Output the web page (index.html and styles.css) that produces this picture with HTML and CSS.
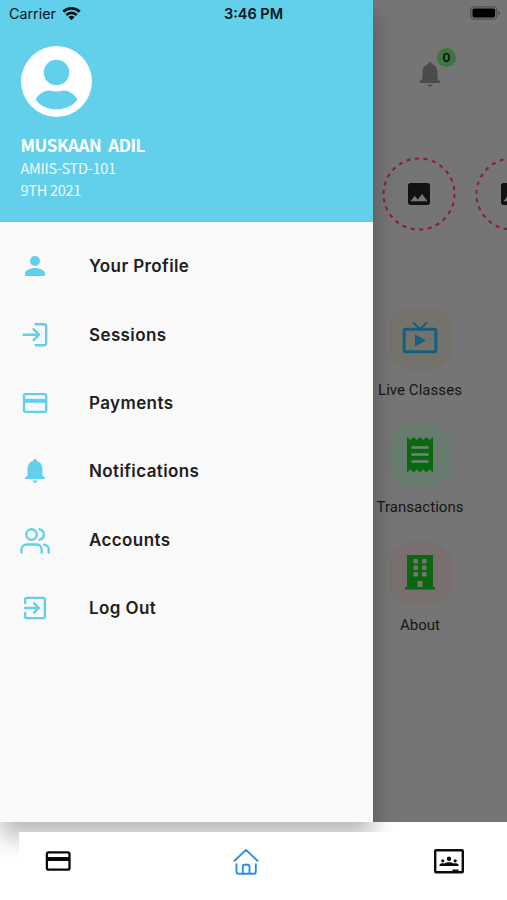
FILE: index.html
```html
<!DOCTYPE html>
<html lang="en">
<head>
<meta charset="utf-8">
<meta name="viewport" content="width=device-width, initial-scale=1">
<title>Student Portal</title>
<link rel="stylesheet" href="styles.css">
</head>
<body>
<div class="phone">
  <main class="screen">
    <div class="topbar">
      <div class="bell">
        <svg class="bell-icon" viewBox="0 0 24 30"><path d="M12 1c1.300 0 2 .9 2 2.100 4 1.100 6 4.500 6 8.600v7.300l3 3v1.600H1V22l3-3v-7.300c0-4.100 2-7.500 6-8.600C10 1.900 10.700 1 12 1zM9.500 25.300h5c-.3 1.500-1.200 2.300-2.500 2.300s-2.200-.8-2.500-2.300z"/></svg>
        <span class="badge">0</span>
      </div>
    </div>
    <div class="stories">
      <div class="story">
        <svg class="ring" viewBox="0 0 74 74"><circle cx="37" cy="37" r="35.500"/></svg>
        <svg class="photo" viewBox="3 3 18 18"><path d="M21 19V5c0-1.100-.9-2-2-2H5c-1.100 0-2 .9-2 2v14c0 1.100.9 2 2 2h14c1.100 0 2-.9 2-2z"/><path class="hill" d="M8.500 13.500l2.500 3.010L14.500 12l4.500 6H5l3.500-4.500z"/></svg>
      </div>
      <div class="story">
        <svg class="ring" viewBox="0 0 74 74"><circle cx="37" cy="37" r="35.500"/></svg>
        <svg class="photo" viewBox="3 3 18 18"><path d="M21 19V5c0-1.100-.9-2-2-2H5c-1.100 0-2 .9-2 2v14c0 1.100.9 2 2 2h14c1.100 0 2-.9 2-2z"/><path class="hill" d="M8.500 13.500l2.500 3.010L14.500 12l4.500 6H5l3.500-4.500z"/></svg>
      </div>
    </div>
    <div class="shortcuts">
      <div class="shortcut">
        <div class="tile cream"><svg width="36" height="38" viewBox="0 0 36 38"><rect x="2.200" y="9.200" width="31.600" height="22.600" rx="1.500" fill="none" stroke="#10607e" stroke-width="3"/><path d="M11 2.500l7 6.500 7-6.500" fill="none" stroke="#10607e" stroke-width="2"/><path d="M13 14.500v12l11-6z" fill="#10607e"/></svg></div>
        <span class="label">Live Classes</span>
      </div>
      <div class="shortcut">
        <div class="tile mint"><svg width="36" height="44" viewBox="0 0 36 44"><path d="M5 3l3.250 3 3.250-3 3.250 3L18 3l3.250 3 3.250-3 3.250 3L31 3v35.500l-3.250-3-3.250 3-3.250-3-3.250 3-3.250-3-3.250 3-3.250-3L5 38.500z" fill="#0c6810"/><path d="M9.500 13.500h17M9.500 20.500h17M9.500 27.500h17" stroke="#70847a" stroke-width="2.300"/></svg></div>
        <span class="label">Transactions</span>
      </div>
      <div class="shortcut">
        <div class="tile rose"><svg width="36" height="42" viewBox="0 0 36 42"><path d="M5 3h26v32h2v2.500H3V35h2z" fill="#0c6810"/><g fill="#7a7272"><rect x="11.500" y="7" width="4.500" height="4.500" rx="1.300"/><rect x="20" y="7" width="4.500" height="4.500" rx="1.300"/><rect x="11.500" y="13.500" width="4.500" height="4.500" rx="1.300"/><rect x="20" y="13.500" width="4.500" height="4.500" rx="1.300"/><rect x="11.500" y="20" width="4.500" height="4.500" rx="1.300"/><rect x="20" y="20" width="4.500" height="4.500" rx="1.300"/><path d="M15.500 29h5v6h-5z"/></g></svg></div>
        <span class="label">About</span>
      </div>
    </div>
  </main>

  <aside class="drawer">
    <header class="profile">
      <svg class="avatar" viewBox="0 0 71 71"><circle cx="35.500" cy="35.500" r="35.500" fill="#fff"/><circle cx="35.500" cy="26.500" r="12.800"/><path d="M14.500 53.200C19 46.800 24.500 44 29 44.600c2.500.6 4.300.9 6.500.9s4-.3 6.500-.9c4.500-.6 10 2.200 14.500 8.600C52 60 44 63.300 35.500 63.300S19 60 14.500 53.200z"/></svg>
      <h1 class="name">MUSKAAN&nbsp; ADIL</h1>
      <p class="detail">AMIIS-STD-101</p>
      <p class="detail">9TH 2021</p>
    </header>
    <nav class="menu">
      <a class="item"><svg viewBox="0 0 30 30"><circle cx="15" cy="10" r="5" fill="currentColor"/><path fill="currentColor" d="M5 25v-2.500c0-3.400 6-5.500 10-5.500s10 2.100 10 5.500V25z"/></svg><span>Your Profile</span></a>
      <a class="item"><svg viewBox="0 0 30 30"><path class="line" d="M15.500 4.200H24c1.500 0 2.200.7 2.200 2.200v16.600c0 1.500-.7 2.200-2.200 2.200h-8.500M3.500 14.700h15.500M13.500 9.200l5.500 5.500-5.500 5.500"/></svg><span>Sessions</span></a>
      <a class="item"><svg viewBox="0 0 30 30"><rect class="line" x="4" y="6.100" width="22.200" height="17.700" rx="1.500"/><path fill="currentColor" d="M4 10.800h22v4H4z"/></svg><span>Payments</span></a>
      <a class="item"><svg viewBox="0 0 30 30"><path fill="currentColor" d="M15 3c1.300 0 1.800.9 1.900 2.100 3.500 1 5.500 3.800 5.500 7.400v7l2.600 2.300V23H5v-1.200l2.600-2.300v-7c0-3.600 2-6.400 5.500-7.400C13.200 3.900 13.700 3 15 3zM12.500 24.500h5c-.3 1.500-1.200 2.200-2.500 2.200s-2.200-.7-2.500-2.200z"/></svg><span>Notifications</span></a>
      <a class="item"><svg viewBox="0 0 30 30"><circle class="line" cx="11.500" cy="9.500" r="5.300"/><path class="line" d="M1.500 27.500v-2.800c0-3 2.300-5.200 5.200-5.200h9.800c2.900 0 5.200 2.200 5.200 5.200v2.800M19.500 4.300c5.700 1.200 5.700 9.200 0 10.400M24 19.600c3 .5 4.700 2.700 4.700 5.200v2.700"/></svg><span>Accounts</span></a>
      <a class="item"><svg viewBox="0 0 30 30"><path class="line" d="M5.200 10V6.600c0-1.100.6-1.700 1.700-1.700h16.300c1.100 0 1.700.6 1.700 1.700v16.800c0 1.100-.6 1.700-1.700 1.700H6.900c-1.100 0-1.700-.6-1.700-1.700V20M5 15h14M14 10.300l4.700 4.700-4.700 4.700"/></svg><span>Log Out</span></a>
    </nav>
  </aside>

  <footer class="tabs">
    <div class="tabbar">
      <svg width="30" height="30" viewBox="0 0 30 30"><rect x="3.900" y="6.300" width="22.600" height="17.400" rx="1.800" fill="none" stroke="#090909" stroke-width="2.300"/><path d="M4 11h22v4H4z" fill="#090909"/></svg>
      <svg class="home" width="30" height="30" viewBox="0 0 30 30"><path d="M3.500 14.800L15 3.900l11.500 10.900M5.500 18.300v7.500c0 1.200.8 2 2 2h15.300c1.200 0 2-.8 2-2v-7.500M11.800 27.500v-7c0-1.100.6-1.700 1.700-1.700h3.300c1.100 0 1.700.6 1.700 1.700v7"/></svg>
      <svg width="30" height="30" viewBox="0 0 30 30"><rect x="1.200" y="4.200" width="27.600" height="22.100" rx=".8" fill="none" stroke="#0d0d0d" stroke-width="2.400"/><g fill="#0d0d0d"><circle cx="15" cy="12.800" r="2.200"/><circle cx="8.800" cy="14.800" r="1.600"/><circle cx="21.200" cy="14.800" r="1.600"/><path d="M5.500 20v-1.200c0-1.400 3-2 5-1.400 2-1.600 7-1.600 9 0 2-.6 5 0 5 1.400V20zM18.500 23.500h6V26h-6z"/></g></svg>
    </div>
  </footer>

  <div class="status">
    <div class="carrier"><span>Carrier</span><svg width="19" height="15" viewBox="0 0 19 15"><g fill="none" stroke="#06151a" stroke-width="2.700"><path d="M1.300 5.800c4.500-4.500 11.900-4.500 16.400 0M4.300 9c2.900-2.900 7.500-2.900 10.400 0"/></g><path d="M9.500 14.300l-3.200-3.200c1.800-1.700 4.600-1.700 6.400 0z" fill="#06151a"/></svg></div>
    <time class="clock">3:46 PM</time>
    <svg class="battery" width="31" height="15" viewBox="0 0 31 15"><rect x=".8" y=".8" width="26" height="12.400" rx="3.500" fill="none" stroke="#515151" stroke-width="1.300"/><rect x="2.500" y="2.500" width="22.600" height="9" rx="1.800" fill="#000"/><path d="M28.300 4.700c2.200.8 2.200 3.800 0 4.600z" fill="#515151"/></svg>
  </div>
</div>
</body>
</html>
```

FILE: styles.css
```css
* { box-sizing: border-box; }
body { margin: 0; background: #fff; font-family: Inter, "Liberation Sans", sans-serif; }
.phone { position: relative; width: 507px; height: 900px; overflow: hidden; display: flex; flex-direction: column; }

.screen { height: 822px; flex: none; padding-left: 372px; background: #757575; overflow: hidden; }
.topbar { height: 157px; padding: 61px 0 0 46px; }
.bell { position: relative; width: 24px; height: 30px; }
.bell-icon { display: block; width: 24px; height: 28px; fill: #4b4b4b; }
.badge { position: absolute; left: 19px; top: -13px; width: 19px; height: 19px; border-radius: 50%; background: #3f7543; color: #061006; font-size: 12px; font-weight: 600; line-height: 19px; text-align: center; }

.stories { display: flex; gap: 19px; padding-left: 10px; height: 150px; }
.story { flex: none; display: grid; place-items: center; width: 74px; height: 74px; }
.story > * { grid-area: 1 / 1; }
.ring { width: 74px; height: 74px; fill: none; stroke: #8c1b3a; stroke-width: 2; stroke-dasharray: 4 4.580; }
.photo { width: 22px; height: 22px; fill: #121212; }
.photo .hill { fill: #777; }

.shortcuts { display: flex; flex-direction: column; width: 96px; }
.shortcut { height: 117.300px; display: flex; flex-direction: column; align-items: center; gap: 10px; }
.tile { width: 63px; height: 63px; border-radius: 24px; display: grid; place-items: center; }
.cream { background: #75716b; }
.mint { background: #677b6f; }
.rose { background: #796f6e; }
.label { font-family: Roboto, sans-serif; font-size: 15px; line-height: 20px; color: #151515; letter-spacing: .05px; white-space: nowrap; }

.drawer { position: absolute; left: 0; top: 0; width: 372.500px; height: 822px; background: #fafafa; box-shadow: 0 15px 22px rgba(0,0,0,.27); }
.profile { height: 222px; padding: 46px 20px 0 20.500px; background: #62cfeb; font-family: "Noto Sans CJK SC", sans-serif; color: #fff; }
.avatar { display: block; width: 71px; height: 71px; fill: #62cfeb; }
.name { margin: 16px 0 0; font-size: 17px; line-height: 24px; font-weight: 700; letter-spacing: -.4px; white-space: nowrap; }
.detail { margin: 0; font-size: 14.500px; line-height: 22px; letter-spacing: -.28px; white-space: nowrap; color: #eefaff; }

.menu { display: flex; flex-direction: column; padding: 10px 20px; }
.item { height: 68.400px; display: flex; align-items: center; gap: 39px; color: #62cfeb; }
.item svg { flex: none; width: 30px; height: 30px; }
.item span { color: #202020; font-size: 17px; font-weight: 600; line-height: 24px; letter-spacing: .39px; white-space: nowrap; }
.line { fill: none; stroke: currentColor; stroke-width: 2.350; stroke-linecap: round; stroke-linejoin: round; }

.tabs { flex: 1; padding: 9.500px 0 0 19px; }
.tabbar { position: relative; height: 68.500px; padding: 14.500px 43px 0 24px; display: flex; justify-content: space-between; background: #fff; }
.home { margin-right: 15px; fill: none; stroke: #2c90e0; stroke-width: 1.900; stroke-linecap: round; stroke-linejoin: round; }

.status { position: absolute; left: 0; top: 0; width: 507px; height: 27px; padding: 0 6px 0 9px; display: grid; grid-template-columns: 1fr auto 1fr; align-items: center; color: #06151a; }
.carrier { display: flex; align-items: center; gap: 6px; font-size: 14.300px; }
.clock { font-size: 14.500px; font-weight: 600; margin-right: 3px; }
.battery { justify-self: end; }
```
